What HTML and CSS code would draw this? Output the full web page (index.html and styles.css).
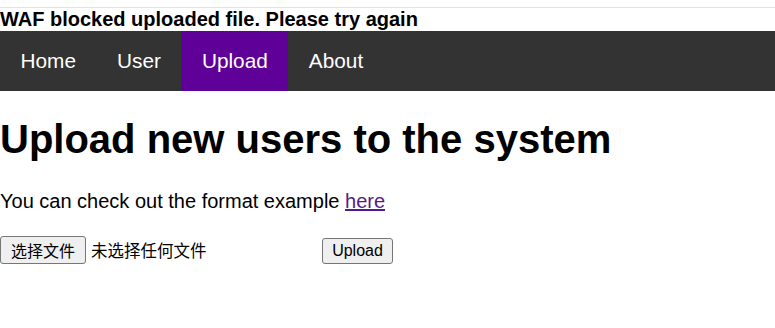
FILE: index.html
```html
<!DOCTYPE html>
<html lang="zh-CN">
<head>
  <meta charset="UTF-8" />
  <meta name="viewport" content="width=device-width, initial-scale=1.0"/>
  <title>Upload</title>
  <link rel="stylesheet" href="styles.css">
</head>
<body>
  <div class="alert">WAF blocked uploaded file. Please try again</div>

  <nav class="navbar">
    <a href="#">Home</a>
    <a href="#">User</a>
    <a href="#" class="active">Upload</a>
    <a href="#">About</a>
  </nav>

  <h1>Upload new users to the system</h1>

  <p class="note">You can check out the format example <a href="#">here</a></p>

  <form class="upload-form">
    <label class="file-picker">
      <span class="file-btn">选择文件</span>
      <span class="file-name">未选择任何文件</span>
    </label>
    <button type="button" class="submit-btn">Upload</button>
  </form>
</body>
</html>
```

FILE: styles.css
```css
body {
  margin: 0;
  font-family: "Liberation Sans", Arial, "Noto Sans CJK SC", sans-serif;
  color: #000;
  background: #fff;
}

.alert {
  margin-top: 7px;
  border-top: 1px solid #e3e3e3;
  font-size: 20px;
  font-weight: bold;
  line-height: 23px;
}

.navbar {
  display: flex;
  background-color: #333;
  height: 60px;
}

.navbar a {
  display: block;
  color: #fff;
  text-decoration: none;
  font-size: 20.8px;
  line-height: 60px;
  padding: 0 20.5px;
}

.navbar a.active {
  background-color: #5f0099;
}

h1 {
  font-size: 40px;
  margin: 26px 0 0 0;
}

.note {
  font-size: 20px;
  line-height: 23px;
  margin: 28px 0 0 0;
}

.note a {
  color: #551a8b;
}

.upload-form {
  display: flex;
  align-items: flex-end;
  margin-top: 23px;
}

.file-picker {
  display: flex;
  align-items: center;
  gap: 5px;
  width: 322px;
  font-size: 16px;
}

.file-btn {
  box-sizing: border-box;
  height: 28px;
  line-height: 26px;
  padding: 0 10px;
  background: #efefef;
  border: 1px solid #767676;
  border-radius: 3px;
  font-family: "Noto Sans CJK SC", sans-serif;
}

.file-name {
  font-family: "Noto Sans CJK SC", sans-serif;
  font-size: 16.5px;
}

.submit-btn {
  box-sizing: border-box;
  height: 26px;
  width: 71px;
  padding: 0;
  font-size: 16px;
  font-family: "Liberation Sans", Arial, sans-serif;
  background: #efefef;
  border: 1px solid #767676;
  border-radius: 3px;
  color: #000;
}
```
